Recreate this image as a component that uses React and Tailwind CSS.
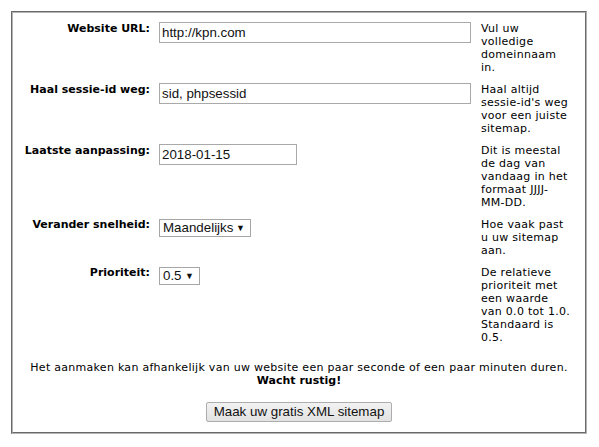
import React from 'react';

const rows = [
  {
    label: 'Website URL:',
    field: { type: 'text', value: 'http://kpn.com', width: 'w-[312px]' },
    help: ['Vul uw', 'volledige', 'domeinnaam', 'in.'],
  },
  {
    label: 'Haal sessie-id weg:',
    field: { type: 'text', value: 'sid, phpsessid', width: 'w-[312px]' },
    help: ['Haal altijd', "sessie-id's weg", 'voor een juiste', 'sitemap.'],
  },
  {
    label: 'Laatste aanpassing:',
    field: { type: 'text', value: '2018-01-15', width: 'w-[138px]' },
    help: ['Dit is meestal', 'de dag van', 'vandaag in het', 'formaat JJJJ-', 'MM-DD.'],
  },
  {
    label: 'Verander snelheid:',
    field: { type: 'select', value: 'Maandelijks', width: 'w-[92px]' },
    help: ['Hoe vaak past', 'u uw sitemap', 'aan.'],
  },
  {
    label: 'Prioriteit:',
    field: { type: 'select', value: '0.5', width: 'w-[41px]' },
    help: ['De relatieve', 'prioriteit met', 'een waarde', 'van 0.0 tot 1.0.', 'Standaard is', '0.5.'],
  },
];

const Field = ({ field }) => {
  if (field.type === 'select') {
    return (
      <div
        className={`${field.width} h-[18px] mt-[1px] flex items-center justify-between pl-[3px] pr-[5px] border border-[#a6a6a6] bg-white text-[13.33px] leading-none text-[#111] font-['Liberation_Sans',Arial,sans-serif]`}
      >
        <span>{field.value}</span>
        <span className="text-[9px]">▼</span>
      </div>
    );
  }
  return (
    <input
      type="text"
      readOnly
      value={field.value}
      className={`${field.width} h-[21px] px-[2px] border border-[#a9a9a9] bg-white text-[13.33px] text-[#111] font-['Liberation_Sans',Arial,sans-serif] outline-none`}
    />
  );
};

export default function App() {
  return (
    <div className="w-[599px] h-[447px] bg-white pt-[11px] pl-[11px] font-['Verdana','DejaVu_Sans',sans-serif] text-[11px] text-black">
      {/* groove border */}
      <div className="w-[576px] h-[423px] border border-t-[#6a6a6a] border-l-[#6a6a6a] border-r-[#b4b4b4] border-b-[#b4b4b4]">
        <div className="h-full border border-t-[#b4b4b4] border-l-[#b4b4b4] border-r-[#6a6a6a] border-b-[#6a6a6a] pt-[9px]">
          <div className="flex flex-col gap-[9px]">
            {rows.map((row) => (
              <div key={row.label} className="grid grid-cols-[146px_322px_1fr] leading-[13px]">
                <div className="pr-[9px] text-right font-bold">{row.label}</div>
                <div>
                  <Field field={row.field} />
                </div>
                <div className="whitespace-nowrap tracking-[0.28px]">
                  {row.help.map((line) => (
                    <div key={line}>{line}</div>
                  ))}
                </div>
              </div>
            ))}
          </div>

          <div className="mt-[17px] text-center leading-[13px]">
            <p className="tracking-[0.28px]">
              Het aanmaken kan afhankelijk van uw website een paar seconde of een paar minuten duren.
            </p>
            <p className="font-bold">Wacht rustig!</p>
          </div>

          <div className="mt-[15px] flex justify-center">
            <button className="h-[20px] px-[7px] border border-[#adadad] rounded-[2px] bg-gradient-to-b from-[#f2f2f2] to-[#e2e2e2] text-[13.33px] leading-none text-[#111] font-['Liberation_Sans',Arial,sans-serif]">
              Maak uw gratis XML sitemap
            </button>
          </div>
        </div>
      </div>
    </div>
  );
}
